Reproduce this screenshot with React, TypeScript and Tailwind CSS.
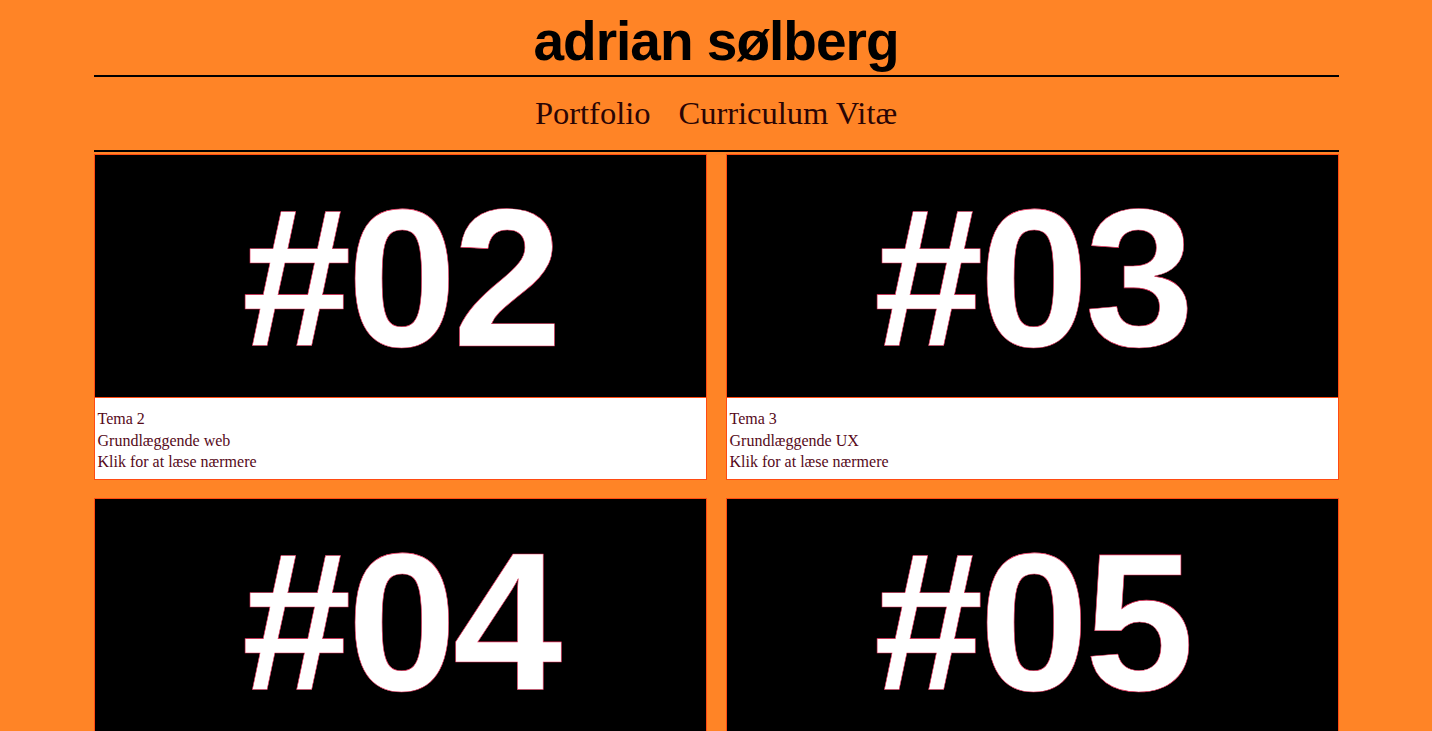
const cards = [
  { num: '#02', tema: 'Tema 2', title: 'Grundlæggende web' },
  { num: '#03', tema: 'Tema 3', title: 'Grundlæggende UX' },
  { num: '#04', tema: 'Tema 4', title: 'Visuel kommunikation' },
  { num: '#05', tema: 'Tema 5', title: 'Interaktionsdesign' },
]

function Card({ num, tema, title }: { num: string; tema: string; title: string }) {
  return (
    <a href="#" className="block border border-[#ff4b12] bg-white">
      <div className="h-[243px] bg-black flex items-center justify-center pt-[5px] border-b border-[#ff4b12]">
        <span className="font-['Liberation_Sans',Arial,sans-serif] font-bold text-[197px] leading-none tracking-[-4px] text-white [-webkit-text-stroke:0.6px_#e8305a]">
          {num}
        </span>
      </div>
      <div className="h-[81px] px-[3px] pt-[10px] font-['Liberation_Serif','Times_New_Roman',serif] text-[16px] leading-[21.5px] text-[#560a1a]">
        <p>{tema}</p>
        <p>{title}</p>
        <p>Klik for at læse nærmere</p>
      </div>
    </a>
  )
}

export default function App() {
  return (
    <div className="min-h-screen bg-[#ff8426]">
      <div className="mx-auto w-[1245px]">
        <header className="h-[77px] border-b-2 border-black flex justify-center">
          <h1 className="pt-[11px] font-['Liberation_Sans',Arial,sans-serif] font-bold text-[55px] leading-[60px] tracking-[-1px] text-black">
            adrian sølberg
          </h1>
        </header>
        <nav className="h-[75px] border-b-2 border-black flex justify-center items-center gap-[28px] font-['Liberation_Serif','Times_New_Roman',serif] text-[32.5px] text-[#2a0505]">
          <a href="#">Portfolio</a>
          <a href="#">Curriculum Vitæ</a>
        </nav>
        <main className="grid grid-cols-2 gap-x-[19px] gap-y-[18px] pt-[2px] pb-[20px]">
          {cards.map((c) => (
            <Card key={c.num} {...c} />
          ))}
        </main>
      </div>
    </div>
  )
}
